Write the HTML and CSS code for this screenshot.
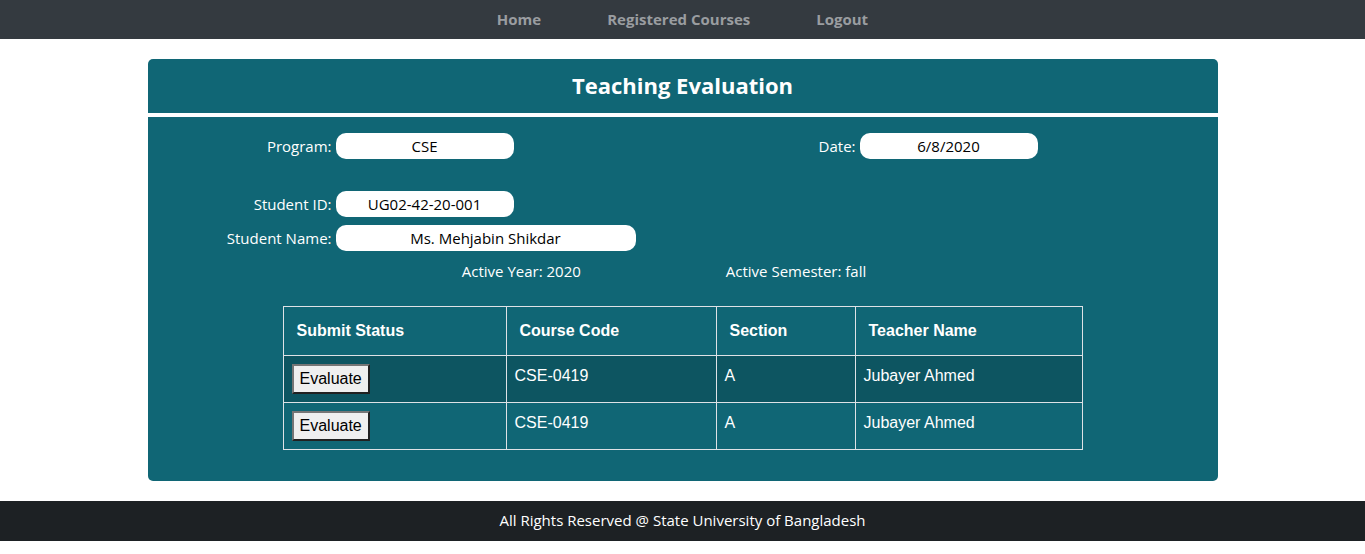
FILE: index.html
```html
<!DOCTYPE html>
<html lang="en">
<head>
<meta charset="utf-8">
<title>Teaching Evaluation</title>
<link rel="stylesheet" href="styles.css">
</head>
<body>
<nav class="navbar">
  <a class="nav-link" href="#">Home</a>
  <a class="nav-link" href="#">Registered Courses</a>
  <a class="nav-link" href="#">Logout</a>
</nav>
<main class="panel">
  <h1 class="panel-title">Teaching Evaluation</h1>
  <form class="details">
    <div class="row">
      <label class="label" for="program">Program:</label>
      <input class="field" id="program" type="text" value="CSE">
      <label class="label label-date" for="date">Date:</label>
      <input class="field" id="date" type="text" value="6/8/2020">
    </div>
    <div class="row row-spaced">
      <label class="label" for="student-id">Student ID:</label>
      <input class="field" id="student-id" type="text" value="UG02-42-20-001">
    </div>
    <div class="row">
      <label class="label" for="student-name">Student Name:</label>
      <input class="field field-wide" id="student-name" type="text" value="Ms. Mehjabin Shikdar">
    </div>
  </form>
  <div class="term">
    <span>Active Year: 2020</span>
    <span>Active Semester: fall</span>
  </div>
  <table class="courses">
    <colgroup><col class="col-status"><col class="col-code"><col class="col-section"><col class="col-teacher"></colgroup>
    <thead>
      <tr><th>Submit Status</th><th>Course Code</th><th>Section</th><th>Teacher Name</th></tr>
    </thead>
    <tbody>
      <tr><td><button class="evaluate" type="button">Evaluate</button></td><td>CSE-0419</td><td>A</td><td>Jubayer Ahmed</td></tr>
      <tr><td><button class="evaluate" type="button">Evaluate</button></td><td>CSE-0419</td><td>A</td><td>Jubayer Ahmed</td></tr>
    </tbody>
  </table>
</main>
<footer class="footer">All Rights Reserved @ State University of Bangladesh</footer>
</body>
</html>
```
FILE: styles.css
```css
* { box-sizing: border-box; }
body {
  margin: 0;
  background: #fff;
  color: #fff;
  font-family: "Segoe UI", "Open Sans", sans-serif;
  font-size: 15px;
  line-height: 24px;
}
.navbar {
  display: flex;
  justify-content: center;
  gap: 66px;
  padding: 7px 0 8px;
  background: #343a40;
}
.nav-link {
  color: #9a9da0;
  font-weight: 700;
  text-decoration: none;
}
.panel {
  max-width: 1070px;
  margin: 20px auto;
  padding-bottom: 31px;
  border-radius: 5px;
  background: #106675;
}
.panel-title {
  margin: 0;
  padding: 8px 0 10px;
  border-bottom: 4px solid #fff;
  font-size: 22px;
  line-height: 36px;
  text-align: center;
}
.details { padding-top: 16px; }
.row {
  display: flex;
  align-items: center;
  gap: 4px;
  margin-bottom: 8px;
}
.row-spaced { margin-top: 32px; }
.label {
  width: 184px;
  text-align: right;
}
.label-date { width: 338px; }
.field {
  width: 178px;
  height: 26px;
  padding: 0;
  border: 0;
  border-radius: 10px;
  background: #fff;
  color: #000;
  font: inherit;
  text-align: center;
}
.field-wide { width: 300px; }
.term {
  display: flex;
  justify-content: center;
  gap: 145px;
  padding-right: 37px;
}
.courses {
  width: 800px;
  max-width: 100%;
  margin: 23px auto 0;
  border-collapse: collapse;
  table-layout: fixed;
  font-family: "Liberation Sans", Arial, sans-serif;
  font-size: 16px;
}
.col-status { width: 223px; }
.col-code { width: 210px; }
.col-section { width: 139px; }
.courses th, .courses td {
  border: 1px solid #dee2e6;
  text-align: left;
  vertical-align: top;
}
.courses th { padding: 12px 13px; }
.courses td { padding: 8px; }
.courses tbody tr:nth-child(odd) { background: #0d5561; }
.evaluate {
  display: block;
  height: 30px;
  padding: 1px 6px;
  border: 2px outset #767676;
  background: #efefef;
  color: #000;
  font: inherit;
}
.footer {
  padding: 7px 0 9px;
  background: #1d2124;
  text-align: center;
}
```
